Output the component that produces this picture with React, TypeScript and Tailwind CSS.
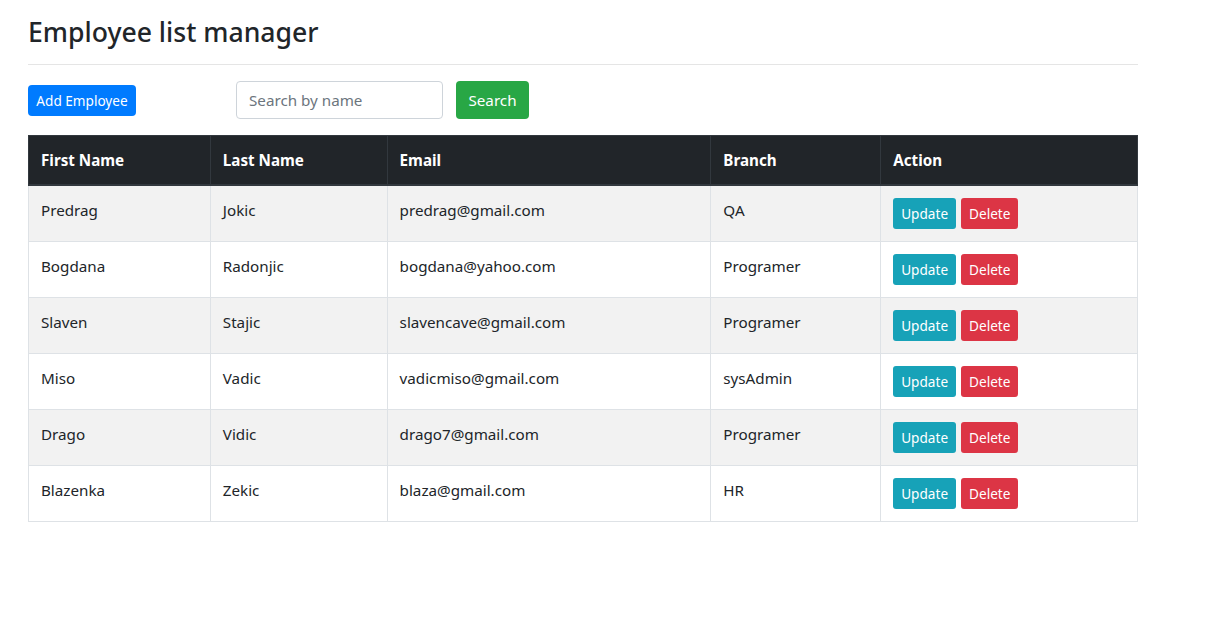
const employees = [
  { first: "Predrag", last: "Jokic", email: "predrag@gmail.com", branch: "QA" },
  { first: "Bogdana", last: "Radonjic", email: "bogdana@yahoo.com", branch: "Programer" },
  { first: "Slaven", last: "Stajic", email: "slavencave@gmail.com", branch: "Programer" },
  { first: "Miso", last: "Vadic", email: "vadicmiso@gmail.com", branch: "sysAdmin" },
  { first: "Drago", last: "Vidic", email: "drago7@gmail.com", branch: "Programer" },
  { first: "Blazenka", last: "Zekic", email: "blaza@gmail.com", branch: "HR" },
];

const headers = ["First Name", "Last Name", "Email", "Branch", "Action"];
const widths = ["w-[182px]", "w-[177px]", "w-[324px]", "w-[170px]", "w-[257px]"];

export default function App() {
  return (
    <div className="min-h-screen bg-white text-[#212529] font-['Noto_Sans',sans-serif] text-[15.2px]">
      <div className="w-[1110px] ml-[28px] pt-[15px]">
        <h3 className="text-[26.6px] leading-[34px] font-medium mb-[15px]">Employee list manager</h3>
        <hr className="border-t border-[#e5e5e5] mb-[16px]" />

        <div className="flex items-center mb-[16px]">
          <button className="h-[31px] w-[108px] rounded-[4px] bg-[#007bff] text-white text-[13.6px] leading-[21px]">
            Add Employee
          </button>
          <input
            type="text"
            placeholder="Search by name"
            className="ml-[100px] w-[207px] h-[38px] px-[12px] border border-[#ced4da] rounded-[4px] text-[15.2px] placeholder:text-[#6c757d] outline-none"
          />
          <button className="ml-[13px] h-[38px] w-[73px] rounded-[4px] bg-[#28a745] text-white text-[15.2px]">
            Search
          </button>
        </div>

        <table className="w-full border-collapse border border-[#dee2e6]">
          <thead>
            <tr className="bg-[#212529] text-white">
              {headers.map((h, i) => (
                <th
                  key={h}
                  className={`${widths[i]} text-left font-bold p-[12px] leading-[24px] border border-[#32383e] border-b-2 align-bottom`}
                >
                  {h}
                </th>
              ))}
            </tr>
          </thead>
          <tbody>
            {employees.map((e, idx) => (
              <tr key={e.email} className={idx % 2 === 0 ? "bg-[#f2f2f2]" : "bg-white"}>
                <td className="p-[12px] leading-[24px] border border-[#dee2e6] align-top">{e.first}</td>
                <td className="p-[12px] leading-[24px] border border-[#dee2e6] align-top">{e.last}</td>
                <td className="p-[12px] leading-[24px] border border-[#dee2e6] align-top">{e.email}</td>
                <td className="p-[12px] leading-[24px] border border-[#dee2e6] align-top">{e.branch}</td>
                <td className="p-[12px] leading-[24px] border border-[#dee2e6] align-top">
                  <div className="flex gap-[5px]">
                    <button className="h-[31px] px-[8px] rounded-[3px] bg-[#17a2b8] text-white text-[13.6px] leading-[21px]">
                      Update
                    </button>
                    <button className="h-[31px] px-[8px] rounded-[3px] bg-[#dc3545] text-white text-[13.6px] leading-[21px]">
                      Delete
                    </button>
                  </div>
                </td>
              </tr>
            ))}
          </tbody>
        </table>
      </div>
    </div>
  );
}
